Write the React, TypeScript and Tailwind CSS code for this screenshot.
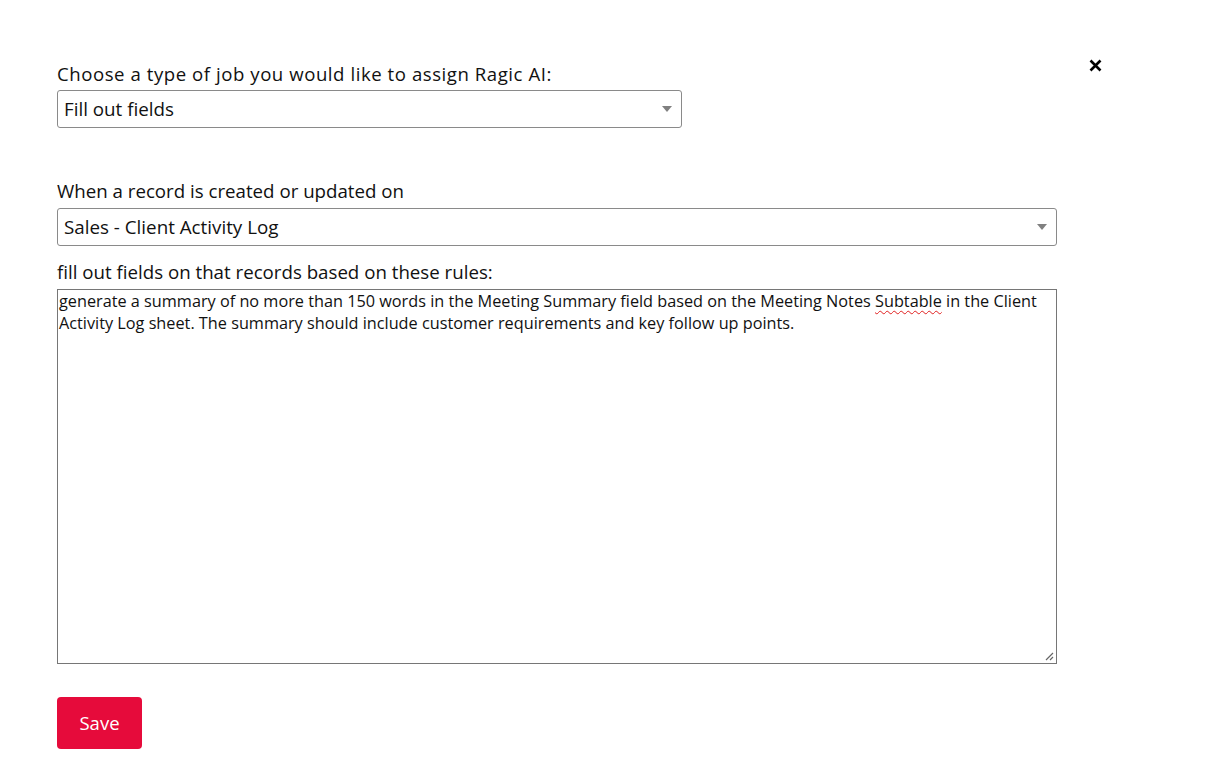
import React from "react";

function Caret() {
  return (
    <svg width="10" height="6" viewBox="0 0 10 6" className="absolute right-[9px] top-1/2 -translate-y-1/2">
      <path d="M0 0 H10 L5 6 Z" fill="#808080" />
    </svg>
  );
}

function FakeSelect({ value, className }: { value: string; className: string }) {
  return (
    <div
      className={`relative h-[38px] border border-[#8a8a8a] rounded-[3px] bg-white flex items-center pl-[6px] text-[18.8px] text-[#111] ${className}`}
    >
      <span>{value}</span>
      <Caret />
    </div>
  );
}

export default function App() {
  return (
    <div
      className="relative w-[1230px] h-[770px] bg-white text-[#111]"
      style={{ fontFamily: '"Open Sans", "Noto Sans", sans-serif' }}
    >
      <button className="absolute left-[1087px] top-[57px] w-[16px] h-[16px] flex items-center justify-center">
        <svg width="13" height="13" viewBox="0 0 13 13">
          <path d="M1.5 1.5 L11.5 11.5 M11.5 1.5 L1.5 11.5" stroke="#000" strokeWidth="2.6" strokeLinecap="butt" />
        </svg>
      </button>

      <div className="flex flex-col pl-[57px] pt-[61px]">
        <label className="text-[18.6px] tracking-[0.55px] leading-[26px] mb-[3px]">Choose a type of job you would like to assign Ragic AI:</label>
        <FakeSelect value="Fill out fields" className="w-[625px]" />

        <label className="text-[18.7px] leading-[26px] mt-[50px] mb-[4px]">When a record is created or updated on</label>
        <FakeSelect value="Sales - Client Activity Log" className="w-[1000px]" />

        <label className="text-[18.7px] leading-[26px] mt-[13px] mb-[4px]">fill out fields on that records based on these rules:</label>
        <div className="relative w-[1000px] h-[375px] border border-[#767676] bg-white pl-[1px] pr-[14px] pt-[0px] text-[16.25px] leading-[22px] text-[#111]">
          generate a summary of no more than 150 words in the Meeting Summary field based on the Meeting Notes{" "}
          <span className="underline decoration-wavy decoration-[#e02020] decoration-1 underline-offset-[3px]">Subtable</span>{" "}
          in the Client Activity Log sheet. The summary should include customer requirements and key follow up points.
          <svg width="10" height="10" viewBox="0 0 10 10" className="absolute right-[2px] bottom-[2px]">
            <path d="M9 2 L2 9 M9 6 L6 9" stroke="#666" strokeWidth="1.2" />
          </svg>
        </div>

        <div className="mt-[33px]">
          <button className="w-[85px] h-[52px] rounded-[4px] bg-[#e60b3b] text-white text-[18.5px]">Save</button>
        </div>
      </div>
    </div>
  );
}
